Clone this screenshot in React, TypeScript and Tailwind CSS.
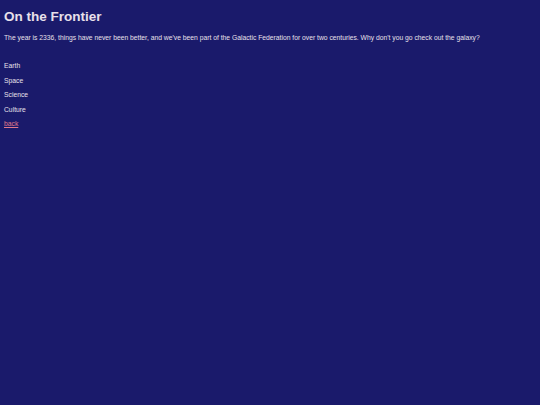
import React from 'react';

const sections = ['Earth', 'Space', 'Science', 'Culture'];

export default function App() {
  return (
    <div className="min-h-[405px] w-full bg-[#1a1a6b] px-[4px] pt-[8px] text-[#e8e0ea] font-['Liberation_Sans',Arial,sans-serif]">
      <h1 className="text-[13.5px] font-bold leading-[18px]">On the Frontier</h1>
      <p className="mt-[7px] text-[6.75px] leading-[9px]">
        The year is 2336, things have never been better, and we've been part of the Galactic Federation for over two centuries. Why don't you go check out the galaxy?
      </p>
      <ul className="mt-[19px] flex flex-col gap-[5.5px] text-[6.75px] leading-[9px]">
        {sections.map(s => (
          <li key={s}>{s}</li>
        ))}
        <li>
          <a href="#" className="text-[#e07a8a] underline">back</a>
        </li>
      </ul>
    </div>
  );
}
